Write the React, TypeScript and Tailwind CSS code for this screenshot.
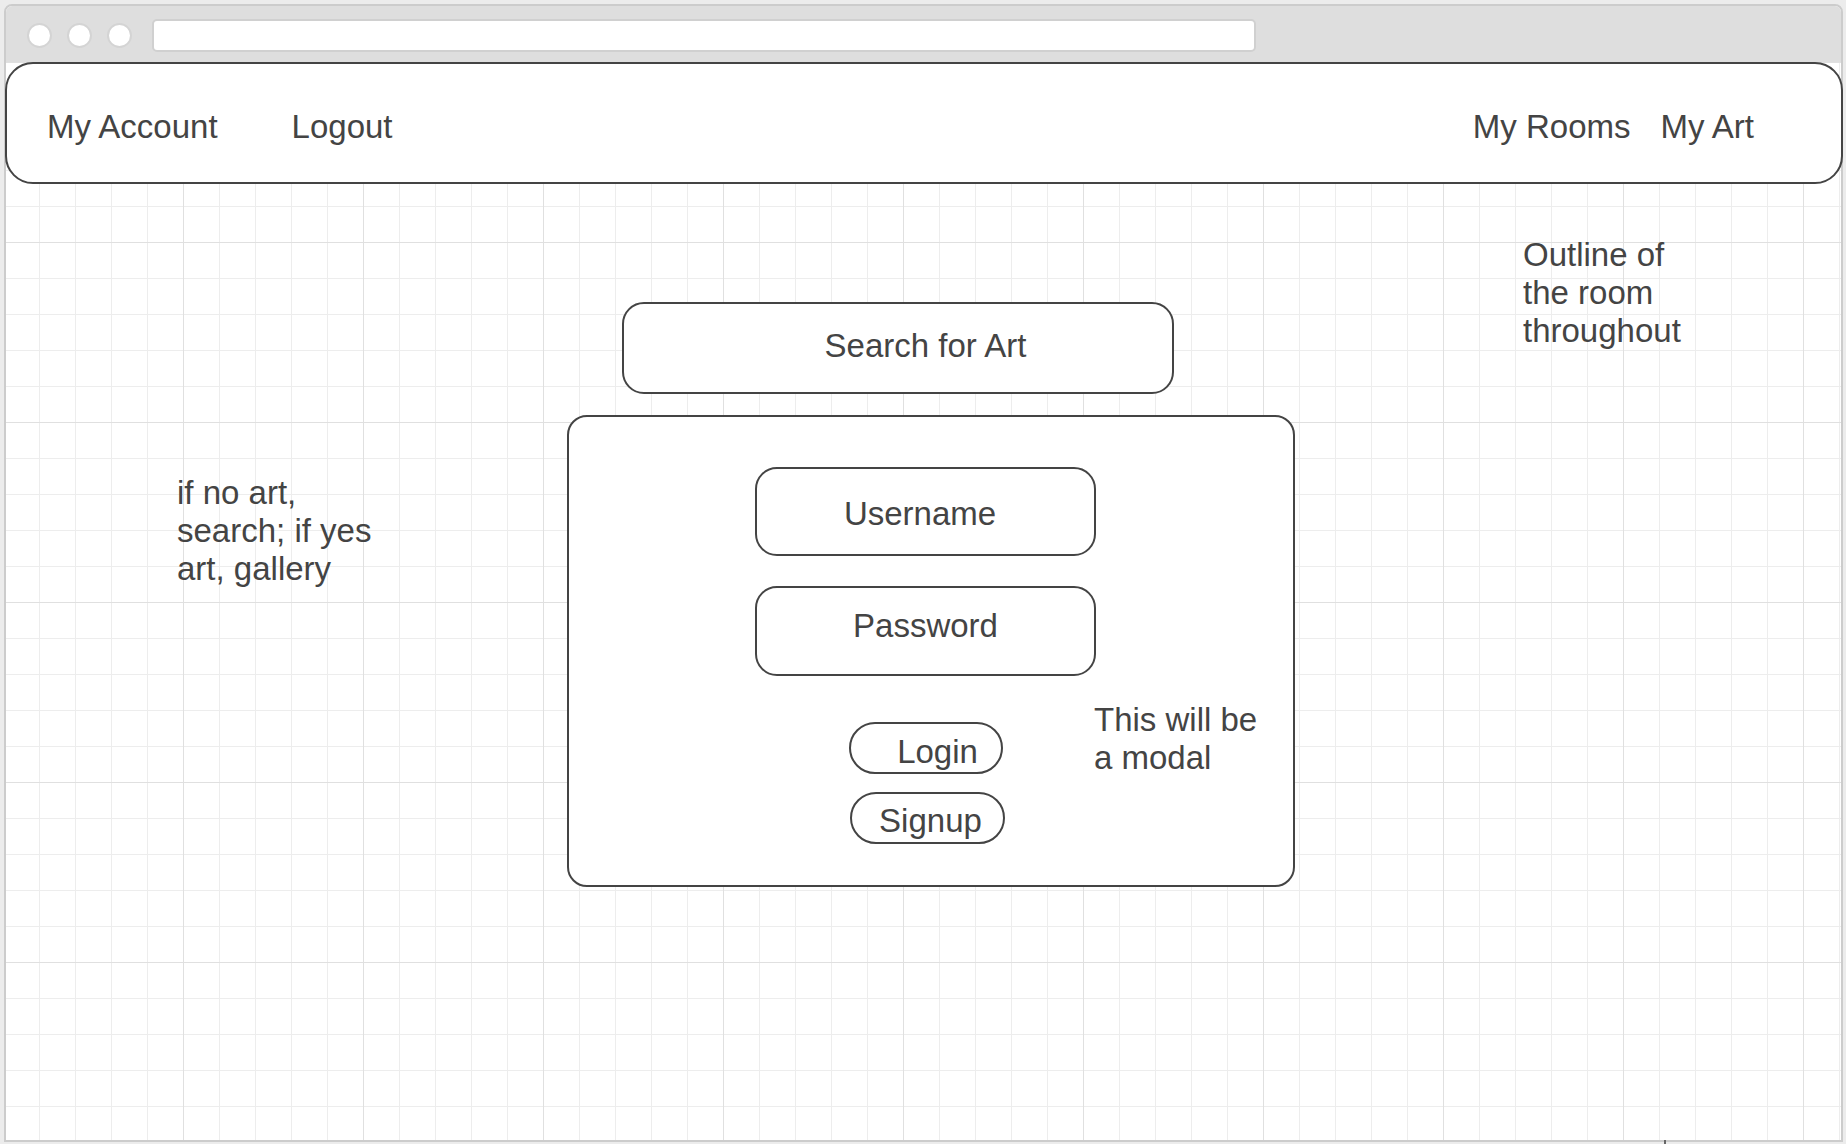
export default function App() {
  const grid =
    "bg-[image:linear-gradient(to_right,#e0e0e0_1px,transparent_1px),linear-gradient(to_bottom,#e0e0e0_1px,transparent_1px),linear-gradient(to_right,#ededed_1px,transparent_1px),linear-gradient(to_bottom,#ededed_1px,transparent_1px)] bg-size-[180px_180px,180px_180px,36px_36px,36px_36px] bg-position-[-3px_0px,-3px_0px,-3px_0px,-3px_0px]";

  return (
    <div className="relative w-[1846px] h-[1144px] bg-[#ececec] pt-[4px] pl-[4px] font-['Liberation_Sans',Arial,sans-serif] text-[33px] leading-[38px] text-[#444444] overflow-hidden">
      <div className="w-[1839px] h-[1138px] border-2 border-[#cccccc] rounded-t-[8px] bg-white flex flex-col">
        {/* browser chrome */}
        <div className="h-[56px] shrink-0 bg-[#dedede] rounded-t-[6px] flex items-center pl-[21px] pt-[2px]">
          <div className="flex gap-[15px]">
            <span className="w-[25px] h-[25px] rounded-full bg-white border-2 border-[#d4d4d4]" />
            <span className="w-[25px] h-[25px] rounded-full bg-white border-2 border-[#d4d4d4]" />
            <span className="w-[25px] h-[25px] rounded-full bg-white border-2 border-[#d4d4d4]" />
          </div>
          <div className="ml-[20px] w-[1104px] h-[33px] bg-white border-2 border-[#d0d0d0] rounded-[5px]" />
        </div>

        {/* canvas */}
        <div className={"flex-1 flex flex-col " + grid}>
          <nav className="-ml-px -mr-[2px] h-[122px] shrink-0 border-2 border-[#444444] rounded-[28px] bg-white flex items-center pt-[7px] pl-[40px] pr-[87px]">
            <span>My Account</span>
            <span className="ml-[74px]">Logout</span>
            <span className="ml-auto">My Rooms</span>
            <span className="ml-[30px]">My Art</span>
          </nav>

          <div className="flex items-start">
            <div className="w-[561px] shrink-0 pl-[171px] pt-[290px]">
              if no art,
              <br />
              search; if yes
              <br />
              art, gallery
            </div>

            <div className="w-[728px] shrink-0 pt-[118px]">
              <div className="ml-[55px] w-[552px] h-[92px] border-2 border-[#444444] rounded-[22px] bg-white flex items-center justify-center pl-[55px] pb-[4px]">
                Search for Art
              </div>

              <div className="mt-[21px] w-[728px] h-[472px] border-2 border-[#444444] rounded-[20px] bg-white pt-[50px] pl-[186px]">
                <div className="w-[341px] h-[89px] border-2 border-[#444444] rounded-[22px] flex items-center justify-center pr-[11px] pt-[4px]">
                  Username
                </div>
                <div className="mt-[30px] w-[341px] h-[90px] border-2 border-[#444444] rounded-[22px] flex items-center justify-center pb-[10px]">
                  Password
                </div>
                <div className="flex items-start">
                  <div className="ml-[94px] w-[156px] shrink-0 flex flex-col">
                    <div className="mt-[46px] w-[154px] h-[52px] border-2 border-[#444444] rounded-full flex items-center justify-center pl-[23px] pt-[8px]">
                      Login
                    </div>
                    <div className="mt-[18px] ml-px w-[155px] h-[52px] border-2 border-[#444444] rounded-full flex items-center justify-center pl-[6px] pt-[6px]">
                      Signup
                    </div>
                  </div>
                  <div className="ml-[89px] mt-[25px]">
                    This will be
                    <br />
                    a modal
                  </div>
                </div>
              </div>
            </div>

            <div className="pl-[228px] pt-[52px]">
              Outline of
              <br />
              the room
              <br />
              throughout
            </div>
          </div>
        </div>
      </div>
      <span className="absolute left-[1664px] top-[1140px] w-[2px] h-[4px] bg-[#666666]" />
    </div>
  );
}
